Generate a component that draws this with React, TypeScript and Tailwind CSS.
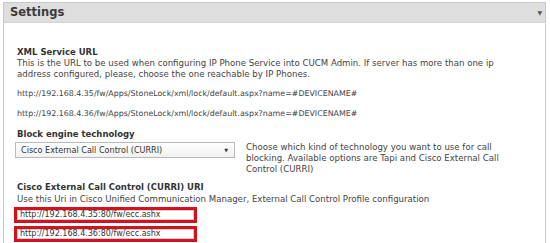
import React from 'react';

const font = { fontFamily: '"DejaVu Sans", Verdana, sans-serif' };

function UrlBox({ value }: { value: string }) {
  return (
    <div className="w-[183px] border-[3px] border-[#d2121f] bg-white">
      <div className="border border-[#cfcfcf] px-[2px] h-[10px] flex items-center text-[8px] text-[#333] leading-none">
        {value}
      </div>
    </div>
  );
}

export default function App() {
  return (
    <div className="w-[550px] h-[243px] bg-white overflow-hidden pt-[2px]" style={font}>
      <div className="ml-[3px] w-[543px] h-[260px] border-t border-l border-r border-[#c9c9c9]">
        {/* Header */}
        <div className="h-[20px] bg-[#dedede] border-b border-[#d4d4d4] flex items-center justify-between pl-[6px] pr-[3px]">
          <span className="text-[11.5px] font-bold text-[#3a3a3a] leading-none">Settings</span>
          <span className="text-[6px] text-[#555] leading-none">▼</span>
        </div>

        <div className="pl-[13px] pr-4 text-[#444]">
          {/* XML Service URL */}
          <div className="mt-[24px] text-[8.5px] font-bold text-[#333] leading-[11px]">XML Service URL</div>
          <p className="text-[8.6px] leading-[11px]">
            This is the URL to be used when configuring IP Phone Service into CUCM Admin. If server has more than one ip
            <br />
            address configured, please, choose the one reachable by IP Phones.
          </p>
          <div className="mt-[9px] text-[7.9px] leading-[10px]">
            http://192.168.4.35/fw/Apps/StoneLock/xml/lock/default.aspx?name=#DEVICENAME#
          </div>
          <div className="mt-[10px] text-[7.9px] leading-[10px]">
            http://192.168.4.36/fw/Apps/StoneLock/xml/lock/default.aspx?name=#DEVICENAME#
          </div>

          {/* Block engine */}
          <div className="mt-[10px] text-[8.5px] font-bold text-[#333] leading-[11px]">Block engine technology</div>
          <div className="flex items-start gap-[11px] mt-[1px] -ml-[2px]">
            <div className="w-[220px] h-[16px] mt-[1px] border border-[#b9b9b9] bg-gradient-to-b from-white to-[#f1f1f1] flex items-center justify-between pl-[5px] pr-[6px] shrink-0">
              <span className="text-[8.1px] text-[#333] leading-none">Cisco External Call Control (CURRI)</span>
              <span className="text-[5px] text-[#333] leading-none">▼</span>
            </div>
            <p className="text-[8.6px] leading-[11px] pt-[1px]">
              Choose which kind of technology you want to use for call
              <br />
              blocking. Available options are Tapi and Cisco External Call
              <br />
              Control (CURRI)
            </p>
          </div>

          {/* CURRI URI */}
          <div className="mt-[7px] text-[8.5px] font-bold text-[#333] leading-[11px]">Cisco External Call Control (CURRI) URI</div>
          <p className="text-[8.6px] leading-[11px] mt-[1px]">
            Use this Uri in Cisco Unified Communication Manager, External Call Control Profile configuration
          </p>
          <div className="-ml-[3px] mt-[2px] flex flex-col gap-[3px]">
            <UrlBox value="http://192.168.4.35:80/fw/ecc.ashx" />
            <UrlBox value="http://192.168.4.36:80/fw/ecc.ashx" />
          </div>
        </div>
      </div>
    </div>
  );
}
